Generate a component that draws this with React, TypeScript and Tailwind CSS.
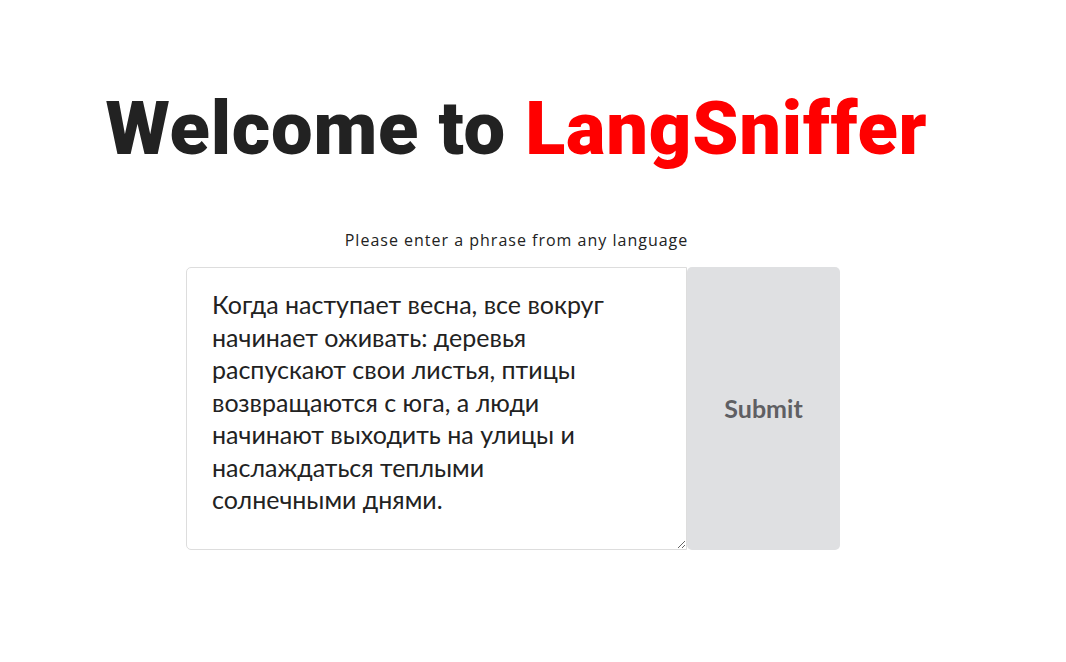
import React from "react";

const App = () => {
  return (
    <main className="min-h-screen w-full bg-white flex flex-col items-center pr-[33px] font-['Lato','Open_Sans',sans-serif]">
      <h1 className="mt-[92px] text-[74px] leading-none font-black tracking-[0.8px] text-[#222222] font-['Roboto','Liberation_Sans',sans-serif]">
        Welcome to <span className="text-[#ff0000]">LangSniffer</span>
      </h1>
      <p className="mt-[62px] text-[16px] tracking-[1px] text-[#222222] font-['Open_Sans',sans-serif]">
        Please enter a phrase from any language
      </p>
      <form className="mt-[15px] mr-[7px] flex">
        <textarea
          className="w-[501px] h-[283px] border border-[#dddddd] rounded-l-[5px] pl-[25px] pr-[74px] pt-[20px] text-[25px] leading-[32.5px] text-[#222222] font-['Lato',sans-serif] outline-none"
          defaultValue="Когда наступает весна, все вокруг начинает оживать: деревья распускают свои листья, птицы возвращаются с юга, а люди начинают выходить на улицы и наслаждаться теплыми солнечными днями."
        />
        <button
          type="button"
          className="w-[153px] h-[283px] bg-[#dfe0e2] rounded-[5px] text-[25px] font-bold text-[#5f5f63] font-['Lato',sans-serif]"
        >
          Submit
        </button>
      </form>
    </main>
  );
};

export default App;
